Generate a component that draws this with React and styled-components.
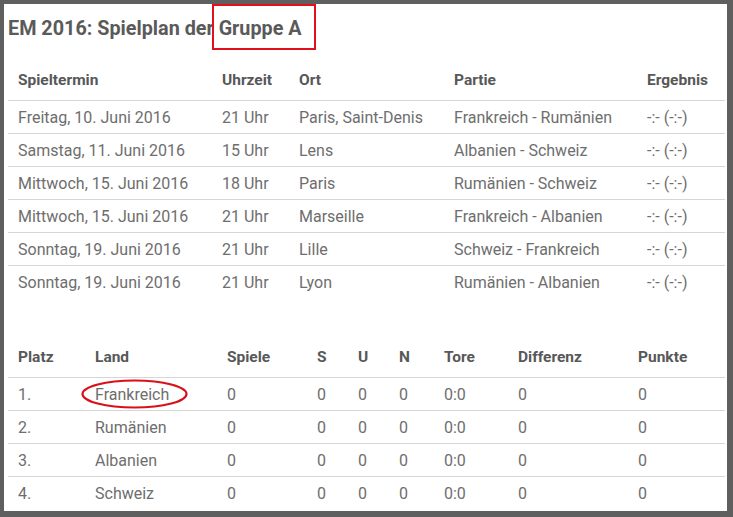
import styled, { createGlobalStyle } from "styled-components";

const GlobalStyle = createGlobalStyle`
  html, body {
    margin: 0;
    padding: 0;
    background: #5f5f5f;
  }
  body {
    font-family: Roboto, "Liberation Sans", Arial, sans-serif;
  }
`;

const Card = styled.div`
  background: #fff;
  margin: 4px 6px 6px 4px;
  height: 507px;
  box-sizing: border-box;
  padding: 0 2px 0 4px;
  overflow: hidden;
`;

const Title = styled.h1`
  margin: 0;
  height: 48px;
  display: flex;
  align-items: center;
  font-size: 19.8px;
  font-weight: 700;
  color: #5a5a5a;
  white-space: pre;
`;

const Boxed = styled.span`
  position: relative;
  &::after {
    content: "";
    position: absolute;
    left: -7px;
    right: -14px;
    top: -13px;
    bottom: -10px;
    border: 2px solid #e2101a;
  }
`;

const Table = styled.div`
  display: flex;
  flex-direction: column;
  margin-top: ${(p) => p.$top}px;
`;

const Row = styled.div`
  display: grid;
  grid-template-columns: ${(p) => p.$cols};
  height: ${(p) => (p.$head ? 40 : 32)}px;
  align-items: center;
  border-bottom: 1px solid ${(p) => (p.$last ? "transparent" : "#d6d6d6")};
`;

const HeadCell = styled.div`
  padding-left: 10px;
  font-size: 15.5px;
  font-weight: 700;
  color: #585858;
  white-space: nowrap;
`;

const Cell = styled.div`
  position: relative;
  padding-left: 10px;
  font-size: 16px;
  color: #6e6e6e;
  white-space: nowrap;
`;

const Ring = styled.svg`
  position: absolute;
  left: -4px;
  top: -6px;
  width: 107px;
  height: 30px;
  overflow: visible;
`;

const matchCols = "204px 77px 155px 193px 88px";
const tableCols = "77px 132px 90px 41px 41px 45px 74px 120px 97px";

const matches = [
  ["Freitag, 10. Juni 2016", "21 Uhr", "Paris, Saint-Denis", "Frankreich - Rumänien"],
  ["Samstag, 11. Juni 2016", "15 Uhr", "Lens", "Albanien - Schweiz"],
  ["Mittwoch, 15. Juni 2016", "18 Uhr", "Paris", "Rumänien - Schweiz"],
  ["Mittwoch, 15. Juni 2016", "21 Uhr", "Marseille", "Frankreich - Albanien"],
  ["Sonntag, 19. Juni 2016", "21 Uhr", "Lille", "Schweiz - Frankreich"],
  ["Sonntag, 19. Juni 2016", "21 Uhr", "Lyon", "Rumänien - Albanien"],
];

const teams = ["Frankreich", "Rumänien", "Albanien", "Schweiz"];

const App = () => {
  return (
    <>
      <GlobalStyle />
      <Card>
        <Title>
          EM 2016: Spielplan der <Boxed>Gruppe A</Boxed>
        </Title>

        <Table $top={8}>
          <Row $head $cols={matchCols}>
            {["Spieltermin", "Uhrzeit", "Ort", "Partie", "Ergebnis"].map((h) => (
              <HeadCell key={h}>{h}</HeadCell>
            ))}
          </Row>
          {matches.map((m, i) => (
            <Row key={i} $cols={matchCols} $last={i === matches.length - 1}>
              {m.map((c, j) => (
                <Cell key={j}>{c}</Cell>
              ))}
              <Cell>-:- (-:-)</Cell>
            </Row>
          ))}
        </Table>

        <Table $top={38}>
          <Row $head $cols={tableCols}>
            {["Platz", "Land", "Spiele", "S", "U", "N", "Tore", "Differenz", "Punkte"].map((h) => (
              <HeadCell key={h}>{h}</HeadCell>
            ))}
          </Row>
          {teams.map((t, i) => (
            <Row key={t} $cols={tableCols} $last={i === teams.length - 1}>
              <Cell>{i + 1}.</Cell>
              <Cell>
                {t}
                {i === 0 && (
                  <Ring viewBox="0 0 107 30">
                    <ellipse cx="53.5" cy="15" rx="52" ry="13.5" fill="none" stroke="#d8101a" strokeWidth="2.2" />
                  </Ring>
                )}
              </Cell>
              <Cell>0</Cell>
              <Cell>0</Cell>
              <Cell>0</Cell>
              <Cell>0</Cell>
              <Cell>0:0</Cell>
              <Cell>0</Cell>
              <Cell>0</Cell>
            </Row>
          ))}
        </Table>
      </Card>
    </>
  );
};

export default App;
